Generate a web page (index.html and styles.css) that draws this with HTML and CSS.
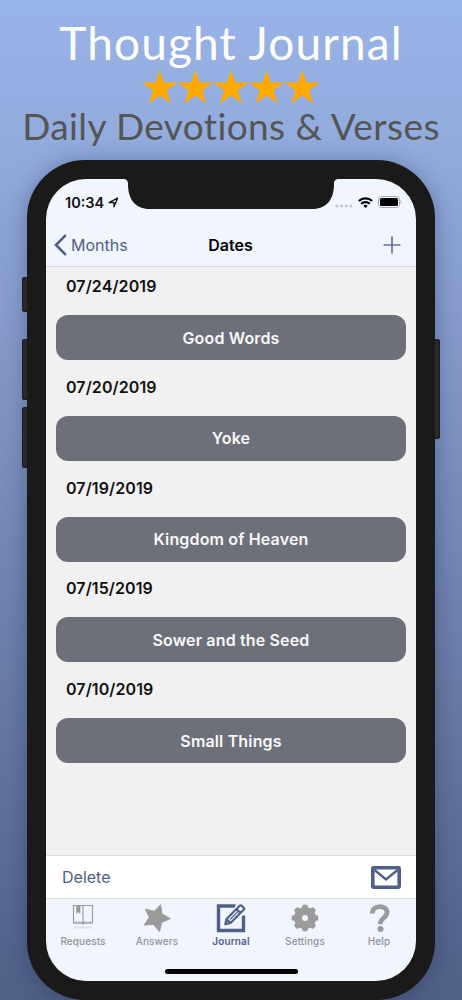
FILE: index.html
```html
<!DOCTYPE html>
<html lang="en">
  <head>
    <meta charset="UTF-8" />
    <meta name="viewport" content="width=device-width, initial-scale=1.0" />
    <title>Thought Journal</title>
    <link rel="stylesheet" href="styles.css">
  </head>
  <body>
    <header class="promo">
      <h1>Thought Journal</h1>
      <svg class="stars" viewBox="0 0 178 34">
        <defs>
          <path id="star" d="M17.800 0l4.100 12.600h13.500L24.600 20.500l4.200 13.100-11-8.100-11 8.100L11 20.500.2 12.600h13.500z" />
        </defs>
        <use href="#star" />
        <use href="#star" x="35.600" />
        <use href="#star" x="71.200" />
        <use href="#star" x="106.800" />
        <use href="#star" x="142.400" />
      </svg>
      <p class="tagline">Daily Devotions &amp; Verses</p>
    </header>

    <main class="phone">
      <span class="key mute"></span>
      <span class="key volume-up"></span>
      <span class="key volume-down"></span>
      <span class="key power"></span>

      <div class="screen">
        <svg class="notch" viewBox="0 0 216 31">
          <path d="M0 0h216c-3.500 0-5 1.500-5 5 0 15-7 25-22 25H27C12 30 5 20 5 5 5 1.500 3.500 0 0 0z" />
        </svg>

        <div class="status">
          <span class="time">10:34</span>
          <svg class="location" viewBox="0 0 11 11">
            <path d="M1 5.500L9.600 1.200 6 9.800V5.500z" fill="none" stroke="#111" stroke-width="1.300" stroke-linejoin="round" />
          </svg>
          <svg class="signal" viewBox="0 0 18 4">
            <g fill="#c3c7d0">
              <circle cx="2" cy="2" r="1.500" />
              <circle cx="6.600" cy="2" r="1.500" />
              <circle cx="11.200" cy="2" r="1.500" />
              <circle cx="15.800" cy="2" r="1.500" />
            </g>
          </svg>
          <svg class="wifi" viewBox="0 0 15 11">
            <g fill="none" stroke="#000" stroke-width="2.200">
              <path d="M.8 4a9.600 9.600 0 0 1 13.400 0" />
              <path d="M3.200 6.800a6.200 6.200 0 0 1 8.600 0" />
            </g>
            <path d="M7.500 11L5.300 8.700a3.200 3.200 0 0 1 4.400 0z" />
          </svg>
          <svg class="battery" viewBox="0 0 24 12">
            <rect x=".5" y=".5" width="21" height="11" rx="3" fill="none" stroke="#a6a9b0" />
            <rect x="2" y="2" width="18" height="8" rx="1.500" />
            <path d="M22.500 4v4c1.300-.5 1.300-3.500 0-4z" fill="#a6a9b0" />
          </svg>
        </div>

        <nav class="navbar">
          <a class="back">
            <svg viewBox="0 0 13 22">
              <path d="M11 1.800L2 11l9 9.200" fill="none" stroke="currentColor" stroke-width="2.600" stroke-linecap="round" />
            </svg>
            <span>Months</span>
          </a>
          <h2>Dates</h2>
          <a class="add">
            <svg viewBox="0 0 18 18">
              <path d="M9 .5v17M.5 9h17" fill="none" stroke="currentColor" stroke-width="1.700" />
            </svg>
          </a>
        </nav>

        <div class="list">
          <section class="entry">
            <h3>07/24/2019</h3>
            <button class="card">Good Words</button>
          </section>
          <section class="entry">
            <h3>07/20/2019</h3>
            <button class="card">Yoke</button>
          </section>
          <section class="entry">
            <h3>07/19/2019</h3>
            <button class="card">Kingdom of Heaven</button>
          </section>
          <section class="entry">
            <h3>07/15/2019</h3>
            <button class="card">Sower and the Seed</button>
          </section>
          <section class="entry">
            <h3>07/10/2019</h3>
            <button class="card">Small Things</button>
          </section>
        </div>

        <div class="toolbar">
          <a class="delete">Delete</a>
          <svg class="mail" viewBox="0 0 30 23">
            <rect x="1.800" y="1.800" width="26.400" height="19.400" rx=".6" fill="none" stroke="currentColor" stroke-width="3.600" />
            <path d="M3.500 4L15 13.500 26.500 4" fill="none" stroke="currentColor" stroke-width="2.400" />
          </svg>
        </div>

        <footer class="tabs">
          <a class="tab">
            <svg viewBox="0 0 30 30">
              <path d="M5.500 2.500h8q1.500 0 1.500 1.300 0-1.300 1.500-1.300h8v16.800h-8q-1.500 0-1.500 1.200 0-1.200-1.500-1.200h-8zM15 3.500v16" fill="none" stroke="#999" stroke-width="1.100" />
              <path d="M5 20.200h8.500L15 21.300l1.500-1.100H25" fill="none" stroke="#aaa" stroke-width="1.200" />
              <path d="M8.300 2.500h4v8.500l-2-2-2 2z" fill="#999" />
              <path d="M6 24.500h18" stroke="#dde1ea" stroke-width="2" />
            </svg>
            <span>Requests</span>
          </a>
          <a class="tab">
            <svg viewBox="0 0 30 30">
              <path d="M18.600 1.700L20 11l8.300 4.500-8.600 4-2.200 9.100-5.900-7.200-9.400.6 5.100-7.600-3.900-8.200 9 2.100z" fill="#9b9b9b" stroke="#9b9b9b" stroke-linejoin="round" />
            </svg>
            <span>Answers</span>
          </a>
          <a class="tab active">
            <svg viewBox="0 0 30 30">
              <path d="M19.500 3H2.500v24.500h25V12.500" fill="none" stroke="currentColor" stroke-width="3.400" />
              <path d="M9.500 22l1.200-6L23.700 2.800q1-1 2 0l2.200 2.200q1 1 0 2L15 20.200z" fill="#f1f5fe" stroke="#f1f5fe" stroke-width="5" />
              <path d="M9.300 21.300l1.200-5.300L23.700 2.800q1-1 2 0l2 2q1 1 0 2L14.500 20zM20.500 6l4 4M10.500 16l4 4" fill="none" stroke="currentColor" stroke-width="2.200" stroke-linejoin="round" />
              <path d="M14 16.500l8-8" stroke="currentColor" stroke-width="1.100" />
            </svg>
            <span>Journal</span>
          </a>
          <a class="tab">
            <svg viewBox="0 0 30 30">
              <g fill="#9b9b9b">
                <path id="teeth" d="M12.500 2q2.500-.8 5 0l.6 4.500v17l-.6 4.500q-2.500.8-5 0l-.6-4.500v-17z" />
                <use href="#teeth" transform="rotate(45 15 15)" />
                <use href="#teeth" transform="rotate(90 15 15)" />
                <use href="#teeth" transform="rotate(135 15 15)" />
                <circle cx="15" cy="15" r="11" />
              </g>
              <circle cx="15" cy="15" r="3" fill="#f1f5fe" />
            </svg>
            <span>Settings</span>
          </a>
          <a class="tab">
            <svg viewBox="0 0 30 30">
              <path d="M8.300 10.500C8.300 1.500 23 1.500 23 9.300c0 6-6.700 5-6.700 12" fill="none" stroke="#9b9b9b" stroke-width="4.800" />
              <circle cx="16.500" cy="26" r="3" fill="#9b9b9b" />
            </svg>
            <span>Help</span>
          </a>
        </footer>
        <div class="home"></div>
      </div>
    </main>
  </body>
</html>
```

FILE: styles.css
```css
* {
  margin: 0;
  padding: 0;
  box-sizing: border-box;
}

body {
  height: 1000px;
  overflow: hidden;
  font-family: Inter, "Liberation Sans", sans-serif;
  color: #111;
  background: linear-gradient(#98b3e8, #93acde 13%, #506087);
}

svg {
  display: block;
  flex: none;
}

/* PROMO */
.promo {
  height: 160px;
  padding-top: 16px;
  display: flex;
  flex-direction: column;
  align-items: center;
  font-family: Lato, sans-serif;
  white-space: nowrap;
}

h1 {
  height: 54px;
  line-height: 54px;
  font-size: 46px;
  font-weight: 400;
  letter-spacing: 1.1px;
  color: #fff;
}

.stars {
  width: 178px;
  height: 34px;
  fill: #ffaa00;
}

.tagline {
  height: 44px;
  line-height: 44px;
  font-size: 37px;
  letter-spacing: 0.4px;
  color: #555;
}

/* PHONE */
.phone {
  position: relative;
  width: 408px;
  height: 840px;
  margin-left: 27px;
  padding: 19px;
  border-radius: 58px;
  background: #1a1a1a;
  box-shadow: 0 2px 22px rgba(20, 30, 70, 0.35);
}

.key {
  position: absolute;
  left: -5px;
  width: 6px;
  background: #292929;
  border: 1px solid #1b1b1b;
  border-radius: 2px 0 0 2px;
}

.mute {
  top: 117px;
  height: 35px;
}

.volume-up {
  top: 179px;
  height: 61px;
}

.volume-down {
  top: 247px;
  height: 61px;
}

.power {
  left: auto;
  right: -5px;
  top: 179px;
  height: 100px;
  border-radius: 0 2px 2px 0;
}

.screen {
  position: relative;
  height: 802px;
  display: flex;
  flex-direction: column;
  border-radius: 40px;
  overflow: hidden;
  background: #f1f5fe;
}

.notch {
  position: absolute;
  top: 0;
  left: 77px;
  width: 216px;
  height: 31px;
  fill: #1a1a1a;
}

.status {
  height: 44px;
  padding: 2px 14px 0 19px;
  display: flex;
  align-items: center;
}

.time {
  font-size: 14.5px;
  font-weight: 600;
}

.location {
  width: 11px;
  height: 11px;
  margin-left: 4px;
}

.signal {
  width: 18px;
  height: 4px;
  margin: 8px 5px 0 auto;
}

.wifi {
  width: 15px;
  height: 11px;
  margin-right: 5px;
}

.battery {
  width: 24px;
  height: 12px;
}

.navbar {
  height: 44px;
  padding: 0 15px 0 8px;
  display: grid;
  grid-template-columns: 1fr auto 1fr;
  align-items: center;
  border-bottom: 1px solid #d5d8df;
}

.back {
  display: flex;
  align-items: center;
  gap: 4px;
  font-size: 16px;
  color: #506087;
}

.back svg {
  width: 13px;
  height: 22px;
}

h2 {
  font-size: 16px;
  font-weight: 600;
  color: #000;
  transform: translateX(3px);
}

.add {
  justify-self: end;
  color: #66739a;
}

.add svg {
  width: 18px;
  height: 18px;
}

/* LIST */
.list {
  flex: 1;
  padding: 0 10px;
  background: #f1f1f1;
}

.entry {
  height: 100.75px;
}

h3 {
  height: 48px;
  padding-left: 10px;
  line-height: 39px;
  font-size: 16px;
  font-weight: 600;
  letter-spacing: 0.1px;
}

.card {
  display: block;
  width: 100%;
  height: 45px;
  border: none;
  border-radius: 12px;
  background: #6d7078;
  color: #f8f8f8;
  font-family: inherit;
  font-size: 16px;
  font-weight: 600;
  letter-spacing: 0.15px;
}

.toolbar {
  height: 44px;
  padding: 0 15px 0 16px;
  display: flex;
  align-items: center;
  justify-content: space-between;
  border-top: 1px solid #ddd;
  border-bottom: 1px solid #dcdee3;
  background: #fff;
  color: #506087;
  font-size: 16px;
}

.mail {
  width: 30px;
  height: 23px;
}

/* TABS */
.tabs {
  height: 82px;
  display: grid;
  grid-template-columns: repeat(5, 1fr);
  padding-top: 4px;
}

.tab {
  display: flex;
  flex-direction: column;
  align-items: center;
  color: #929395;
  font-size: 10px;
  font-weight: 500;
  letter-spacing: 0.1px;
}

.tab svg {
  width: 30px;
  height: 30px;
  margin-bottom: 2px;
}

.active {
  color: #506087;
  font-weight: 600;
}

.home {
  position: absolute;
  left: 119px;
  bottom: 7px;
  width: 133px;
  height: 5px;
  border-radius: 3px;
  background: #000;
}
```
